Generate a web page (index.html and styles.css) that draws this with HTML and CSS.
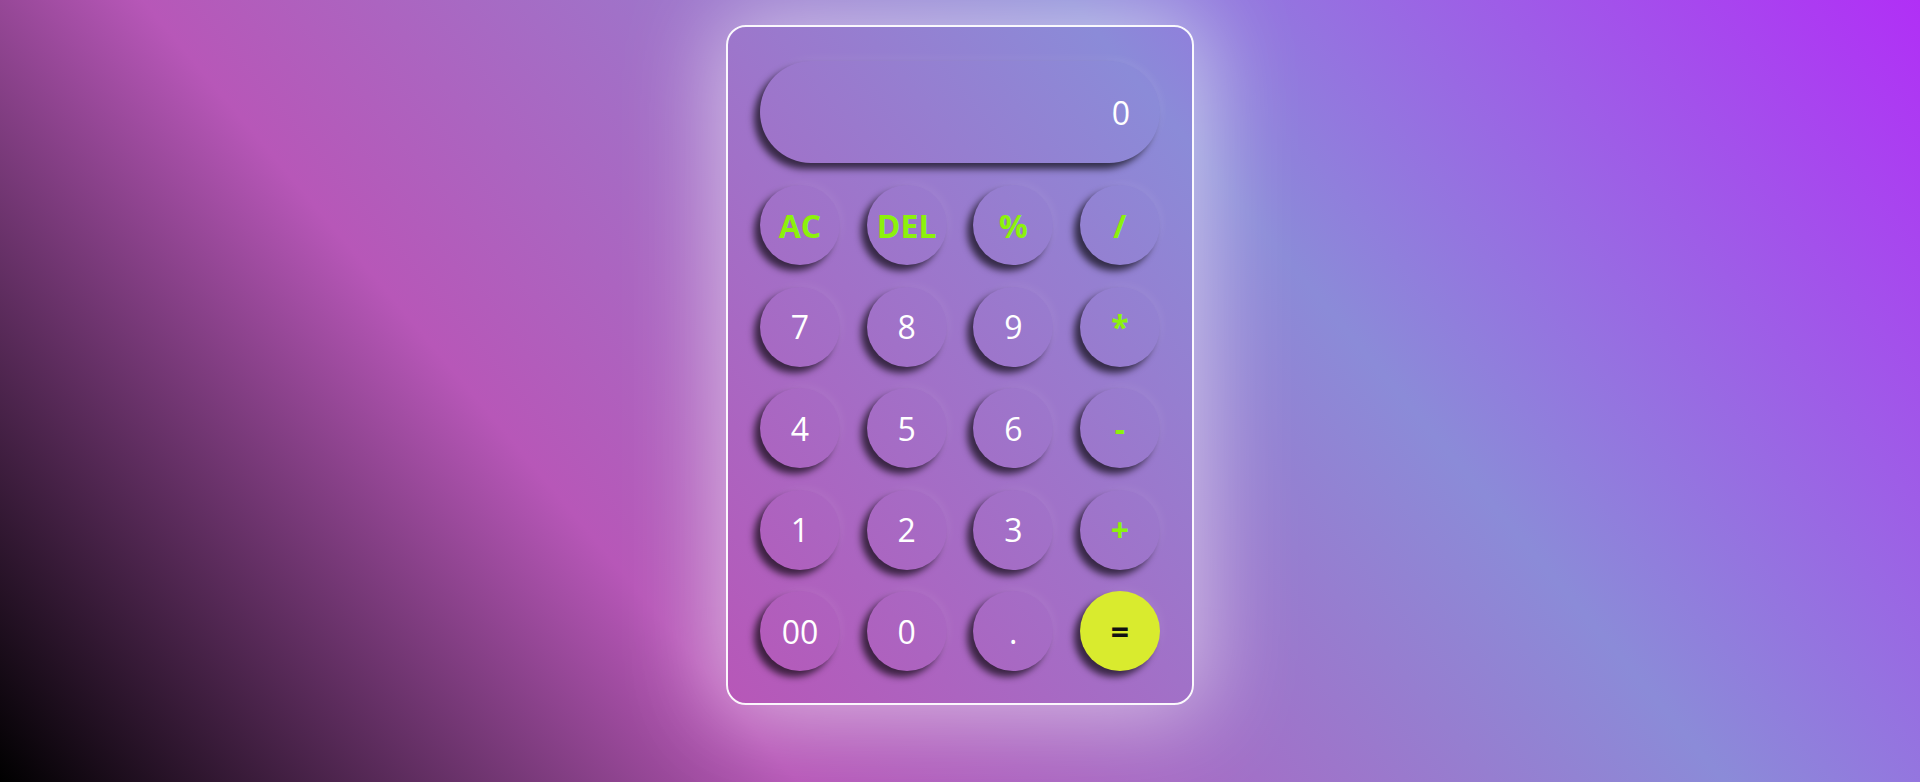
FILE: index.html
```html
<!DOCTYPE html>
<html lang="en">
<head>
<meta charset="UTF-8">
<title>Calculator</title>
<link rel="stylesheet" href="styles.css">
</head>
<body>
  <div class="calculator">
    <div class="display">0</div>
    <div class="keys">
      <button class="key op">AC</button>
      <button class="key op">DEL</button>
      <button class="key op">%</button>
      <button class="key op">/</button>
      <button class="key">7</button>
      <button class="key">8</button>
      <button class="key">9</button>
      <button class="key op">*</button>
      <button class="key">4</button>
      <button class="key">5</button>
      <button class="key">6</button>
      <button class="key op">-</button>
      <button class="key">1</button>
      <button class="key">2</button>
      <button class="key">3</button>
      <button class="key op">+</button>
      <button class="key">00</button>
      <button class="key">0</button>
      <button class="key">.</button>
      <button class="key equal">=</button>
    </div>
  </div>
</body>
</html>
```
FILE: styles.css
```css
* {
  box-sizing: border-box;
}

html, body {
  margin: 0;
  height: 782px;
  overflow: hidden;
}

body {
  font-family: "Open Sans", "Noto Sans", sans-serif;
  background: linear-gradient(50deg, #000000 0%, #b757b8 31%, #8b8bd8 67%, #b12ff6 100%);
  display: flex;
  justify-content: center;
  align-items: flex-start;
}

.calculator {
  margin-top: 25px;
  width: 468px;
  height: 680px;
  border: 2px solid rgba(255, 255, 255, 0.95);
  border-radius: 20px;
  padding: 34px 32px 31px 32px;
  background: transparent;
  box-shadow: 0 0 90px 10px rgba(255, 255, 255, 0.55);
  display: flex;
  flex-direction: column;
}

.display {
  height: 102px;
  border-radius: 51px;
  margin-bottom: 22px;
  padding-right: 30px;
  display: flex;
  align-items: center;
  justify-content: flex-end;
  color: #ffffff;
  font-size: 32px;
  box-shadow: -6px 6px 7px rgba(0, 0, 0, 0.65), 3px -3px 8px rgba(255, 255, 255, 0.06);
}

.keys {
  display: grid;
  grid-template-columns: repeat(4, 80px);
  grid-auto-rows: 80px;
  justify-content: space-between;
  row-gap: 21.5px;
}

.key {
  width: 80px;
  height: 80px;
  border: none;
  border-radius: 50%;
  background: transparent;
  color: #ffffff;
  font-family: "Open Sans", "Noto Sans", sans-serif;
  font-size: 32px;
  padding: 0;
  display: flex;
  align-items: center;
  justify-content: center;
  box-shadow: -6px 6px 7px rgba(0, 0, 0, 0.65), 3px -3px 8px rgba(255, 255, 255, 0.06);
}

.op {
  color: #8cf20c;
  font-weight: 700;
}

.equal {
  background: #d9eb2e;
  color: #111111;
  font-weight: 700;
}
```
